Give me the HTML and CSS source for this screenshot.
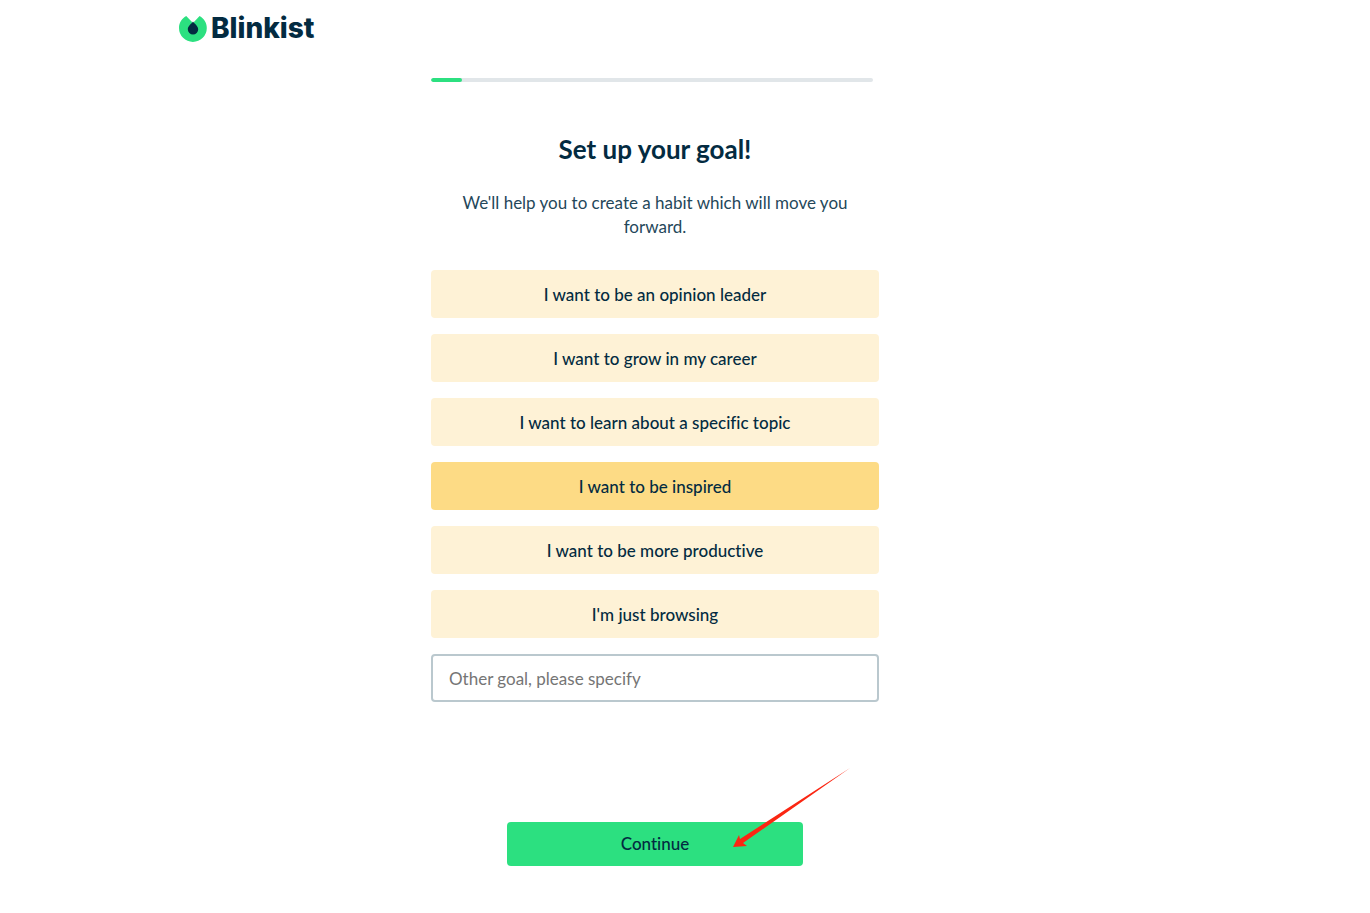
FILE: index.html
```html
<!DOCTYPE html>
<html lang="en">
<head>
<meta charset="utf-8">
<meta name="viewport" content="width=device-width, initial-scale=1">
<title>Blinkist</title>
<link rel="stylesheet" href="styles.css">
</head>
<body>
<header class="header">
  <a class="logo" href="#">
    <svg class="logo-mark" viewBox="0 0 28 28" aria-hidden="true">
      <path fill="#2ce080" d="M7.200 2C2.800 4.300 0 8.900 0 14a13.900 13.900 0 0 0 27.800 0c0-5.100-2.800-9.700-7.200-12L14 9z"/>
      <path fill="#032b41" d="M14 7.500c1.500 2.400 5.200 4.300 5.200 7.800a5.200 5.200 0 0 1-10.400 0c0-3.500 3.700-5.400 5.200-7.800z"/>
    </svg>
    <span class="logo-name">Blinkist</span>
  </a>
</header>
<main class="setup">
  <div class="progress" role="progressbar" aria-label="Setup progress" aria-valuenow="7" aria-valuemin="0" aria-valuemax="100">
    <div class="progress-fill" style="width: 7%"></div>
  </div>
  <h1 class="title">Set up your goal!</h1>
  <p class="intro">We'll help you to create a habit which will move you forward.</p>
  <form class="goals">
    <button class="goal" type="button">I want to be an opinion leader</button>
    <button class="goal" type="button">I want to grow in my career</button>
    <button class="goal" type="button">I want to learn about a specific topic</button>
    <button class="goal goal-selected" type="button" aria-pressed="true">I want to be inspired</button>
    <button class="goal" type="button">I want to be more productive</button>
    <button class="goal" type="button">I'm just browsing</button>
    <input class="other" type="text" aria-label="Other goal" placeholder="Other goal, please specify">
    <div class="actions">
      <button class="continue" type="submit">Continue</button>
      <svg class="arrow" viewBox="0 0 118 80" aria-hidden="true">
        <path fill="#fb2612" d="M0 79l6-12 1 4L117 0 10 75l4 3z"/>
      </svg>
    </div>
  </form>
</main>
</body>
</html>
```
FILE: styles.css
```css
* { box-sizing: border-box; }

body {
  margin: 0;
  padding: 0 60px 0 0;
  background: #fff;
  color: #032b41;
  font-family: Lato, "Open Sans", sans-serif;
  font-size: 17px;
  line-height: 24px;
  font-variant-ligatures: none;
}

.header {
  max-width: 952px;
  margin: 0 auto;
  padding: 12px 0;
}

.logo {
  display: flex;
  width: fit-content;
  align-items: center;
  gap: 4px;
  height: 32px;
  color: inherit;
  text-decoration: none;
}

.logo-mark { width: 28px; height: 28px; }

.logo-name {
  font-family: Inter, Lato, sans-serif;
  font-size: 28px;
  font-weight: 800;
  line-height: 32px;
}

.setup {
  max-width: 448px;
  margin: 0 auto;
  padding: 22px 0 47px;
}

.progress {
  height: 4px;
  margin-right: 6px;
  border-radius: 2px;
  background: #e1e6e9;
  overflow: hidden;
}

.progress-fill {
  height: 100%;
  border-radius: 2px;
  background: #2ce080;
}

.title {
  margin: 51px 0 26px;
  font-size: 26px;
  font-weight: 700;
  line-height: 32px;
  text-align: center;
}

.intro {
  margin: 0 0 31px;
  padding: 0 24px;
  color: #24475a;
  text-align: center;
}

.goals {
  display: flex;
  flex-direction: column;
  gap: 16px;
}

.goal,
.continue {
  border: 0;
  border-radius: 4px;
  color: inherit;
  font: inherit;
  font-weight: 500;
  font-variant-ligatures: none;
  cursor: pointer;
}

.goal {
  min-height: 48px;
  padding: 2px 8px 0;
  background: #fef2d6;
}

.goal-selected { background: #fddb85; }

.other {
  height: 48px;
  padding: 0 16px;
  border: 2px solid #bac8ce;
  border-radius: 4px;
  background: #fff;
  color: inherit;
  font: inherit;
}

.other::placeholder { color: #757575; opacity: 1; }

.actions {
  position: relative;
  width: 100%;
  max-width: 296px;
  margin: 104px auto 0;
}

.continue {
  display: block;
  width: 100%;
  min-height: 44px;
  background: #2ce080;
}

.arrow {
  position: absolute;
  top: -54px;
  left: 226px;
  width: 118px;
  height: 80px;
  pointer-events: none;
}
```
